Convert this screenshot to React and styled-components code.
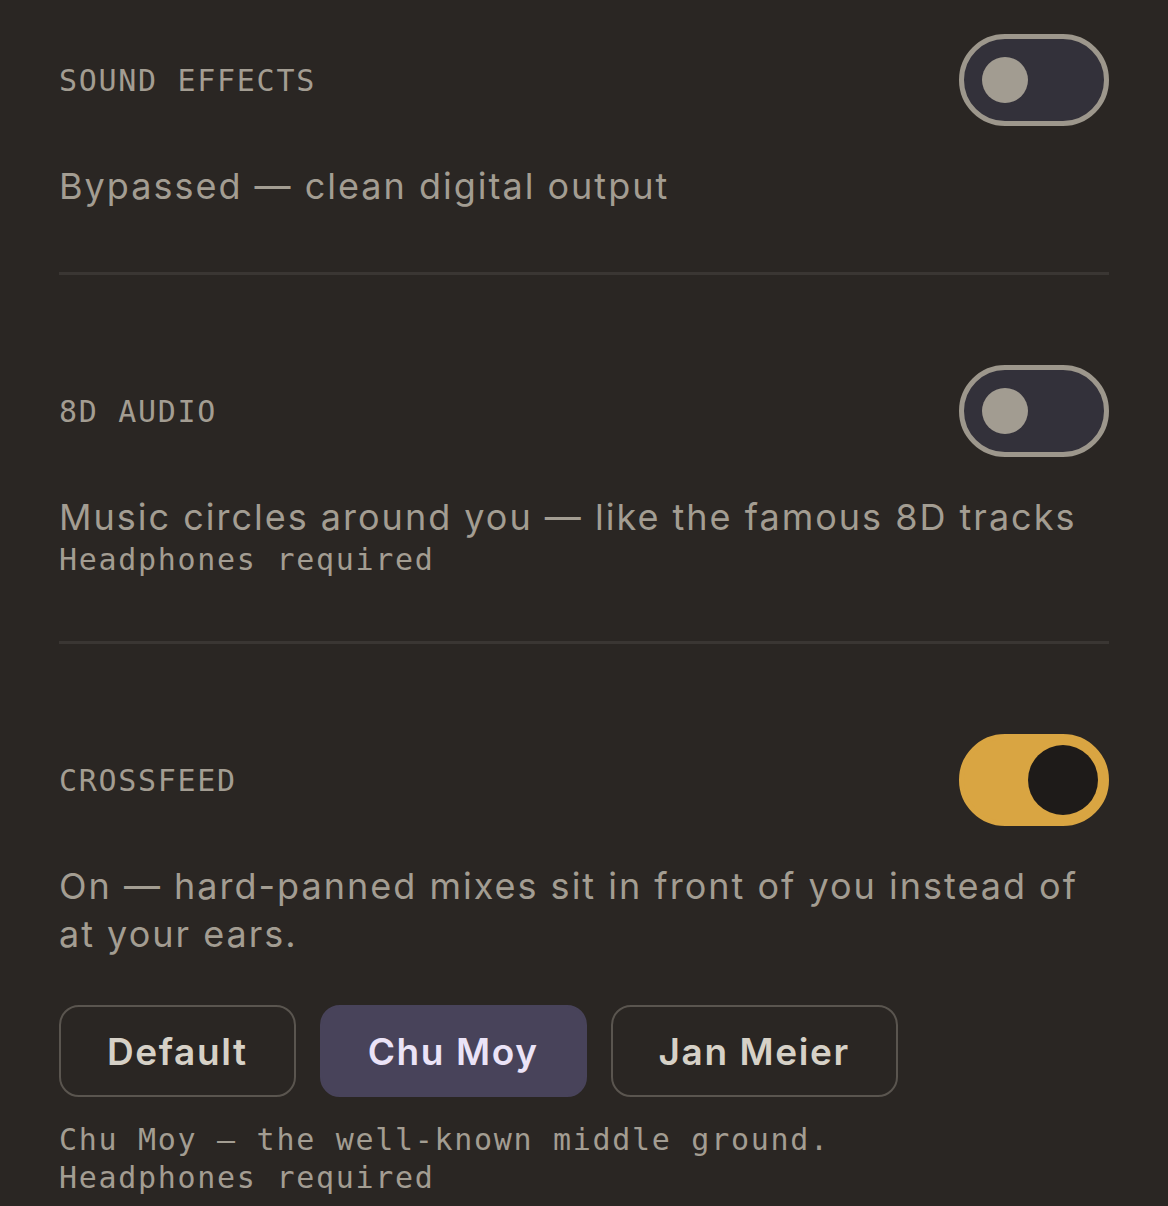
import React, { useState } from 'react'
import styled, { createGlobalStyle } from 'styled-components'

const GlobalStyle = createGlobalStyle`
  html, body {
    margin: 0;
    padding: 0;
    background: #2a2623;
  }
`

const Page = styled.div`
  box-sizing: border-box;
  width: 1168px;
  min-height: 1206px;
  padding: 0 59px;
  background: #2a2623;
  font-family: Inter, 'Noto Sans', sans-serif;
`

const Section = styled.section`
  padding: 90px 0 62px;
  border-bottom: 3px solid #3a3633;

  &:first-child {
    padding-top: 34px;
  }

  &:last-child {
    border-bottom: none;
    padding-bottom: 0;
  }
`

const Header = styled.div`
  display: flex;
  align-items: center;
  justify-content: space-between;
`

const Label = styled.div`
  font-family: 'DejaVu Sans Mono', 'Liberation Mono', monospace;
  font-size: 30px;
  letter-spacing: 1.7px;
  color: #a39d92;
`

const Track = styled.button`
  box-sizing: border-box;
  width: 150px;
  height: 92px;
  border-radius: 46px;
  border: 5px solid ${p => (p.$on ? '#d9a542' : '#9d978c')};
  background: ${p => (p.$on ? '#d9a542' : '#33313a')};
  padding: 0;
  display: flex;
  align-items: center;
  justify-content: ${p => (p.$on ? 'flex-end' : 'flex-start')};
  cursor: pointer;
`

const Knob = styled.span`
  display: block;
  width: ${p => (p.$on ? '70px' : '46px')};
  height: ${p => (p.$on ? '70px' : '46px')};
  border-radius: 50%;
  margin: ${p => (p.$on ? '0 6px 0 0' : '0 0 0 18px')};
  background: ${p => (p.$on ? '#1e1b19' : '#a29c91')};
`

const Description = styled.p`
  margin: 36px 0 0;
  font-size: 36px;
  line-height: 48px;
  letter-spacing: 2px;
  color: #a39d92;
`

const Note = styled.div`
  font-family: 'DejaVu Sans Mono', 'Liberation Mono', monospace;
  font-size: 30px;
  line-height: 38px;
  letter-spacing: 1.7px;
  color: #a39d92;
  margin-top: ${p => p.$gap || 0}px;
`

const Options = styled.div`
  display: flex;
  gap: 24px;
  margin-top: 47px;
`

const Option = styled.button`
  box-sizing: border-box;
  height: 92px;
  padding: 0 46px;
  border-radius: 20px;
  border: 2px solid ${p => (p.$active ? '#48435a' : '#5a554f')};
  background: ${p => (p.$active ? '#48435a' : 'transparent')};
  color: ${p => (p.$active ? '#ebe3f7' : '#d6d1c7')};
  font-family: Inter, 'Noto Sans', sans-serif;
  font-size: 37px;
  font-weight: 600;
  letter-spacing: 1.6px;
  cursor: pointer;
`

function Toggle({ on, onChange }) {
  return (
    <Track $on={on} onClick={() => onChange(!on)}>
      <Knob $on={on} />
    </Track>
  )
}

const presets = ['Default', 'Chu Moy', 'Jan Meier']

export default function App() {
  const [sfx, setSfx] = useState(false)
  const [spatial, setSpatial] = useState(false)
  const [crossfeed, setCrossfeed] = useState(true)
  const [preset, setPreset] = useState('Chu Moy')

  return (
    <Page>
      <GlobalStyle />
      <Section>
        <Header>
          <Label>SOUND EFFECTS</Label>
          <Toggle on={sfx} onChange={setSfx} />
        </Header>
        <Description>Bypassed — clean digital output</Description>
      </Section>

      <Section>
        <Header>
          <Label>8D AUDIO</Label>
          <Toggle on={spatial} onChange={setSpatial} />
        </Header>
        <Description>Music circles around you — like the famous 8D tracks</Description>
        <Note>Headphones required</Note>
      </Section>

      <Section>
        <Header>
          <Label>CROSSFEED</Label>
          <Toggle on={crossfeed} onChange={setCrossfeed} />
        </Header>
        <Description>
          On — hard-panned mixes sit in front of you instead of at your ears.
        </Description>
        <Options>
          {presets.map(name => (
            <Option key={name} $active={preset === name} onClick={() => setPreset(name)}>
              {name}
            </Option>
          ))}
        </Options>
        <Note $gap={24}>
          Chu Moy — the well-known middle ground.
          <br />
          Headphones required
        </Note>
      </Section>
    </Page>
  )
}
